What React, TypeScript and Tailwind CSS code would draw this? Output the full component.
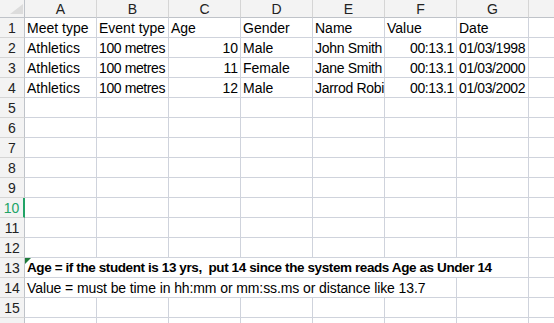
import React from "react";

const COLS = ["A", "B", "C", "D", "E", "F", "G", ""];
type Cell = { t: string; r?: boolean; k?: string };
const T = "tracking-[-0.4px]";
const N = "tracking-[-0.3px]";
const data: Record<number, Cell[]> = {
  1: [{ t: "Meet type" }, { t: "Event type" }, { t: "Age" }, { t: "Gender" }, { t: "Name" }, { t: "Value" }, { t: "Date" }, { t: "" }],
  2: [{ t: "Athletics" }, { t: "100 metres", k: T }, { t: "10", r: true }, { t: "Male" }, { t: "John Smith", k: N }, { t: "00:13.1", r: true, k: T }, { t: "01/03/1998", k: T }, { t: "" }],
  3: [{ t: "Athletics" }, { t: "100 metres", k: T }, { t: "11", r: true }, { t: "Female" }, { t: "Jane Smith", k: N }, { t: "00:13.1", r: true, k: T }, { t: "01/03/2000", k: T }, { t: "" }],
  4: [{ t: "Athletics" }, { t: "100 metres", k: T }, { t: "12", r: true }, { t: "Male" }, { t: "Jarrod Robinson", k: N }, { t: "00:13.1", r: true, k: T }, { t: "01/03/2002", k: T }, { t: "" }],
};

function RowHeader({ n, active }: { n: number; active?: boolean }) {
  return (
    <div
      className={
        "w-[25px] shrink-0 h-full flex items-end justify-center bg-[#f3f3f3] border-b border-[#d5d5d5] " +
        (active ? "border-r-2 border-r-[#21a366] text-[#21a366] bg-[#ececec]" : "border-r border-r-[#bfc3c9] text-[#222]")
      }
    >
      {n}
    </div>
  );
}

export default function App() {
  const rows = Array.from({ length: 16 }, (_, i) => i + 1);
  return (
    <div
      className="w-[554px] h-[323px] overflow-hidden bg-white text-[14px] leading-[18px] text-black"
      style={{ fontFamily: "'Liberation Sans', Arial, sans-serif" }}
    >
      {/* column header */}
      <div className="flex h-[18px] w-[700px]">
        <div className="w-[25px] shrink-0 h-full bg-[#f3f3f3] border-r border-b border-[#bfc3c9] relative">
          <svg className="absolute left-[10px] top-[4px]" width="13" height="10" viewBox="0 0 13 10">
            <polygon points="13,0 13,10 0,10" fill="#dcdcdc" />
          </svg>
        </div>
        {COLS.map((c, i) => (
          <div
            key={i}
            className="w-[72px] shrink-0 h-full flex items-center justify-center bg-[#f3f3f3] border-r border-r-[#d5d5d5] border-b border-b-[#bfc3c9] text-[#222]"
          >
            {c}
          </div>
        ))}
      </div>
      {rows.map((n) => {
        if (n === 13 || n === 14) {
          const wideCount = n === 13 ? 6 : 5;
          const text =
            n === 13
              ? "Age = if the student is 13 yrs,\u00a0 put 14 since the system reads Age as Under 14"
              : "Value = must be time in hh:mm or mm:ss.ms or distance like 13.7";
          return (
            <div key={n} className="flex h-[20px] w-[700px]">
              <RowHeader n={n} />
              <div
                className="shrink-0 h-full border-b border-[#cfd3dc] flex items-end pl-[2px] relative"
                style={{ width: wideCount * 72 }}
              >
                {n === 13 && (
                  <svg className="absolute left-0 top-0" width="6" height="6" viewBox="0 0 6 6">
                    <polygon points="0,0 6,0 0,6" fill="#1e7c3a" />
                  </svg>
                )}
                <span
                  className={
                    "whitespace-nowrap " +
                    (n === 13 ? "font-bold text-[13.5px] tracking-[-0.4px]" : "tracking-[-0.1px]")
                  }
                >
                  {text}
                </span>
              </div>
              {Array.from({ length: 8 - wideCount }, (_, k) => (
                <div key={k} className="w-[72px] shrink-0 h-full border-r border-b border-[#cfd3dc]" />
              ))}
            </div>
          );
        }
        const cells = data[n] ?? COLS.map(() => ({ t: "" }));
        return (
          <div key={n} className="flex h-[20px] w-[700px]">
            <RowHeader n={n} active={n === 10} />
            {cells.map((c, i) => (
              <div
                key={i}
                className={
                  "w-[72px] shrink-0 h-full border-r border-b border-[#cfd3dc] flex items-end overflow-hidden whitespace-nowrap " +
                  (c.r ? "justify-end pr-[2px] " : "pl-[2px] ") +
                  (c.k ?? "")
                }
              >
                {c.t}
              </div>
            ))}
          </div>
        );
      })}
    </div>
  );
}
